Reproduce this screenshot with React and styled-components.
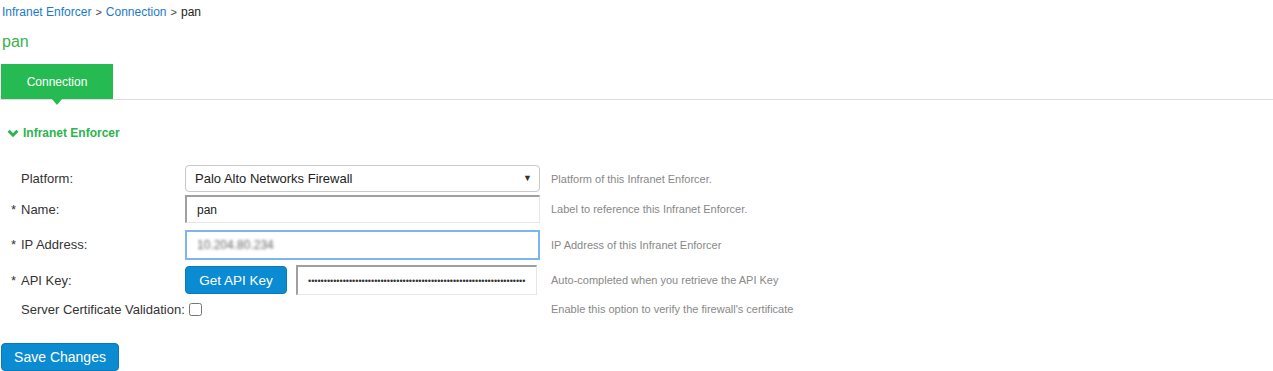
import React from 'react';
import styled, { createGlobalStyle } from 'styled-components';

const GlobalStyle = createGlobalStyle`
  body {
    margin: 0;
    background: #fff;
    font-family: "Liberation Sans", Arial, sans-serif;
    color: #333;
  }
`;

const Chevron = () => (
  <svg width="12" height="9" viewBox="0 0 12 9">
    <polyline points="1.6,1.8 6,6.2 10.4,1.8" fill="none" stroke="currentColor" strokeWidth="3" />
  </svg>
);

const App = () => {
  return (
    <Page>
      <GlobalStyle />
      <Breadcrumb>
        <Crumb href="#">Infranet Enforcer</Crumb>
        <Sep>&gt;</Sep>
        <Crumb href="#">Connection</Crumb>
        <Sep>&gt;</Sep>
        <Current>pan</Current>
      </Breadcrumb>
      <Title>pan</Title>
      <TabBar>
        <Tab>Connection</Tab>
      </TabBar>
      <Section>
        <Chevron />
        Infranet Enforcer
      </Section>
      <Form>
        <Row $h={31}>
          <Label>Platform:</Label>
          <Field>
            <SelectWrap>
              <Select defaultValue="pan">
                <option value="pan">Palo Alto Networks Firewall</option>
              </Select>
            </SelectWrap>
          </Field>
          <Help>Platform of this Infranet Enforcer.</Help>
        </Row>
        <Row $h={30}>
          <Label $required>Name:</Label>
          <Field>
            <Input defaultValue="pan" />
          </Field>
          <Help>Label to reference this Infranet Enforcer.</Help>
        </Row>
        <Row $h={41}>
          <Label $required>IP Address:</Label>
          <Field>
            <Input $focused $blurred defaultValue="10.204.80.234" />
          </Field>
          <Help>IP Address of this Infranet Enforcer</Help>
        </Row>
        <Row $h={30}>
          <Label $required>API Key:</Label>
          <Field>
            <ApiGroup>
              <BlueButton $size={13.5} $w={102}>Get API Key</BlueButton>
              <Password type="password" defaultValue={'x'.repeat(69)} />
            </ApiGroup>
          </Field>
          <Help>Auto-completed when you retrieve the API Key</Help>
        </Row>
        <Row $h={28}>
          <Label>Server Certificate Validation:</Label>
          <Field>
            <Checkbox type="checkbox" />
          </Field>
          <Help>Enable this option to verify the firewall's certificate</Help>
        </Row>
      </Form>
      <Footer>
        <BlueButton $size={14} $w={118}>Save Changes</BlueButton>
      </Footer>
    </Page>
  );
};

export default App;

const Page = styled.div`
  width: 1273px;
  height: 371px;
  overflow: hidden;
`;

const Breadcrumb = styled.div`
  display: flex;
  align-items: center;
  gap: 4px;
  padding: 4px 0 0 2px;
  height: 16px;
  font-size: 12px;
  line-height: 16px;
`;

const Crumb = styled.a`
  color: #1a7bc6;
  text-decoration: none;
`;

const Sep = styled.span`
  color: #444;
  font-size: 11px;
`;

const Current = styled.span`
  color: #222;
`;

const Title = styled.h1`
  margin: 12px 0 0 2px;
  font-size: 16px;
  line-height: 20px;
  font-weight: normal;
  color: #3bb14b;
`;

const TabBar = styled.div`
  display: flex;
  margin-top: 12px;
  border-bottom: 1px solid #ddd;
`;

const Tab = styled.div`
  position: relative;
  display: flex;
  align-items: center;
  justify-content: center;
  width: 112px;
  height: 35px;
  margin-left: 1px;
  background: #25bb52;
  color: #fff;
  font-size: 12px;

  &::after {
    content: '';
    position: absolute;
    left: 50%;
    bottom: -6px;
    transform: translateX(-50%);
    border-top: 6px solid #25bb52;
    border-left: 5px solid transparent;
    border-right: 5px solid transparent;
  }
`;

const Section = styled.div`
  display: flex;
  align-items: center;
  gap: 4px;
  margin-top: 26px;
  padding-left: 7px;
  height: 14px;
  font-size: 12px;
  font-weight: bold;
  color: #2db44d;
`;

const Form = styled.div`
  display: flex;
  flex-direction: column;
  margin-top: 23px;
`;

const Row = styled.div`
  display: grid;
  grid-template-columns: 174px 355px 1fr;
  align-items: center;
  height: ${p => p.$h}px;
  padding-left: 11px;
`;

const Label = styled.div`
  position: relative;
  padding-left: 10px;
  font-size: 13px;
  color: #333;

  &::before {
    content: ${p => (p.$required ? "'*'" : "''")};
    position: absolute;
    left: 0;
    top: 0;
  }
`;

const Field = styled.div`
  display: flex;
  align-items: center;
`;

const Help = styled.div`
  padding-left: 11px;
  font-size: 11px;
  color: #888;
`;

const SelectWrap = styled.div`
  position: relative;
  width: 100%;

  &::after {
    content: '▼';
    position: absolute;
    right: 8px;
    top: 8px;
    font-size: 9px;
    color: #333;
    pointer-events: none;
  }
`;

const Select = styled.select`
  appearance: none;
  width: 100%;
  height: 27px;
  padding: 0 20px 0 9px;
  border: 1px solid #c8c8c8;
  border-radius: 4px;
  background: #fff;
  font-family: inherit;
  font-size: 13px;
  color: #222;
`;

const Input = styled.input`
  box-sizing: border-box;
  width: 100%;
  height: ${p => (p.$focused ? 30 : 28)}px;
  padding: 0 10px;
  font-family: inherit;
  font-size: 12px;
  color: ${p => (p.$blurred ? 'transparent' : '#222')};
  text-shadow: ${p => (p.$blurred ? '0 0 3px rgba(0,0,0,0.6)' : 'none')};
  background: #fff;
  outline: none;
  border-style: solid;
  border-width: ${p => (p.$focused ? '2px' : '2px 1px 1px 2px')};
  border-color: ${p => (p.$focused ? '#7db6ec' : '#a0a0a0 #e6e6e6 #e6e6e6 #a0a0a0')};
`;

const ApiGroup = styled.div`
  display: flex;
  align-items: center;
  gap: 9px;
  width: 352px;
`;

const BlueButton = styled.button`
  width: ${p => p.$w}px;
  height: 28px;
  padding: 0;
  border: 1px solid #0a79b8;
  border-radius: 4px;
  background: #0b8bd1;
  color: #fff;
  font-family: inherit;
  font-size: ${p => p.$size}px;
  cursor: pointer;
`;

const Password = styled.input`
  box-sizing: border-box;
  flex: 1;
  height: 30px;
  padding: 0 10px;
  font-family: inherit;
  font-size: 9px;
  color: #333;
  background: #fff;
  outline: none;
  border-style: solid;
  border-width: 2px 1px 1px 2px;
  border-color: #a0a0a0 #e6e6e6 #e6e6e6 #a0a0a0;
`;

const Checkbox = styled.input`
  width: 13px;
  height: 13px;
  margin: 0 0 0 4px;
`;

const Footer = styled.div`
  margin-top: 20px;
  padding-left: 1px;
`;
